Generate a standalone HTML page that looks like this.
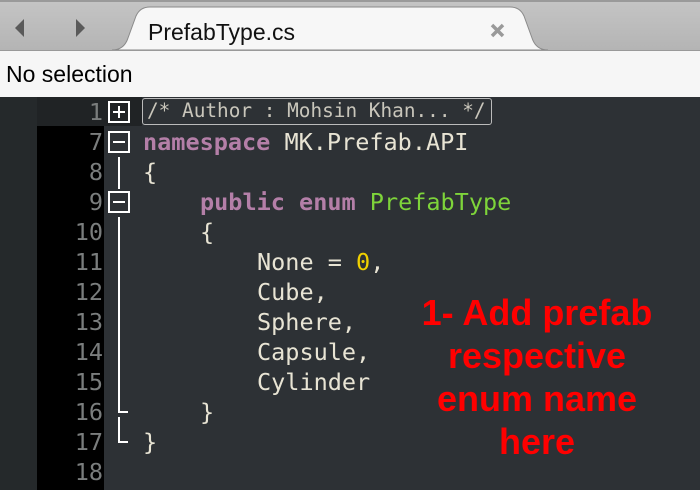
<!DOCTYPE html>
<html><head><style>
body{margin:0;width:700px;height:490px;overflow:hidden;background:#2d3135;position:relative;font-family:"DejaVu Sans Mono",monospace}
.abs{position:absolute}
#tabbar{left:0;top:0;width:700px;height:50px;background:linear-gradient(#c4c4c4,#b4b4b4);border-top:2px solid #9a9a9a;box-sizing:border-box}
#status{left:0;top:50px;width:700px;height:47px;background:#f6f6f6;border-top:1px solid #999;box-sizing:border-box;font:23px "Liberation Sans",sans-serif;color:#000;line-height:46px;padding-left:6px}
#strip{left:0;top:97px;width:37px;height:393px;background:#25292b}
#gut{left:37px;top:126px;width:67px;height:364px;background:#000}
#l1{left:37px;top:97px;width:105px;height:29px;background:#202325}
.ln{position:absolute;left:37px;width:66px;text-align:right;color:#7a7d7d;font-size:23.5px;line-height:30px}
.code{position:absolute;left:143px;color:#e8e4d4;font-size:23.5px;line-height:30px;white-space:pre}
.k{color:#b47fa8;font-weight:bold}.g{color:#7ed43a}.y{color:#f0d000}
.box{position:absolute;left:108px;width:22px;height:22px;border:2px solid #fff;box-sizing:border-box}
.box:before{content:"";position:absolute;left:3px;right:3px;top:8px;height:2px;background:#fff}
.plus:after{content:"";position:absolute;top:3px;bottom:3px;left:8px;width:2px;background:#fff}
.vl{position:absolute;left:118px;width:2px;background:#fff}
#red{left:390px;top:291px;width:294px;text-align:center;color:#ff0000;font:bold 36px/43px "Liberation Sans",sans-serif}
</style></head><body>
<div id="tabbar" class="abs"></div>
<svg class="abs" style="left:0;top:0" width="700" height="50">
<path d="M112 50 Q124 50 128 38 L136 16 Q140 7 150 7 L510 7 Q520 7 524 16 L532 38 Q536 50 548 50 Z" fill="#f7f7f7" stroke="#8a8a8a" stroke-width="1"/>
<path d="M24 19 L15 28 L24 37 Z" fill="#5a5a5a"/>
<path d="M76 19 L85 28 L76 37 Z" fill="#5a5a5a"/>
<text x="148" y="40" font-family="Liberation Sans" font-size="23" fill="#111">PrefabType.cs</text>
<path d="M492 25 L503 36 M503 25 L492 36" stroke="#9a9a9a" stroke-width="3.5"/>
</svg>
<div id="status" class="abs">No selection</div>
<div id="strip" class="abs"></div>
<div id="gut" class="abs"></div>
<div id="l1" class="abs"></div>
<div class="ln" style="top:97px">1</div>
<div class="ln" style="top:127px">7</div>
<div class="ln" style="top:157px">8</div>
<div class="ln" style="top:187px">9</div>
<div class="ln" style="top:217px">10</div>
<div class="ln" style="top:247px">11</div>
<div class="ln" style="top:277px">12</div>
<div class="ln" style="top:307px">13</div>
<div class="ln" style="top:337px">14</div>
<div class="ln" style="top:367px">15</div>
<div class="ln" style="top:397px">16</div>
<div class="ln" style="top:427px">17</div>
<div class="ln" style="top:457px">18</div>
<div class="box plus" style="top:101px"></div>
<div class="box" style="top:131px"></div>
<div class="box" style="top:191px"></div>
<div class="vl" style="top:157px;height:32px"></div>
<div class="vl" style="top:217px;height:196px"></div>
<div class="vl" style="top:411px;width:10px;height:2px"></div>
<div class="vl" style="top:417px;height:26px"></div>
<div class="vl" style="top:441px;width:10px;height:2px"></div>
<div class="abs" style="left:142px;top:98px;width:350px;height:27px;border:1.5px solid #bbb;border-radius:3px;box-sizing:border-box"></div>
<div class="code" style="top:96px;left:147px;color:#c9c6bb;font-size:19.4px">/* Author : Mohsin Khan... */</div>
<div class="code" style="top:127px"><span class="k">namespace</span> MK.Prefab.API</div>
<div class="code" style="top:157px">{</div>
<div class="code" style="top:187px;left:200px"><span class="k">public</span> <span class="k">enum</span> <span class="g">PrefabType</span></div>
<div class="code" style="top:217px;left:200px">{</div>
<div class="code" style="top:247px;left:257px">None = <span class="y">0</span>,</div>
<div class="code" style="top:277px;left:257px">Cube,</div>
<div class="code" style="top:307px;left:257px">Sphere,</div>
<div class="code" style="top:337px;left:257px">Capsule,</div>
<div class="code" style="top:367px;left:257px">Cylinder</div>
<div class="code" style="top:397px;left:200px">}</div>
<div class="code" style="top:427px">}</div>
<div id="red" class="abs">1- Add prefab<br>respective<br>enum name<br>here</div>
</body></html>
